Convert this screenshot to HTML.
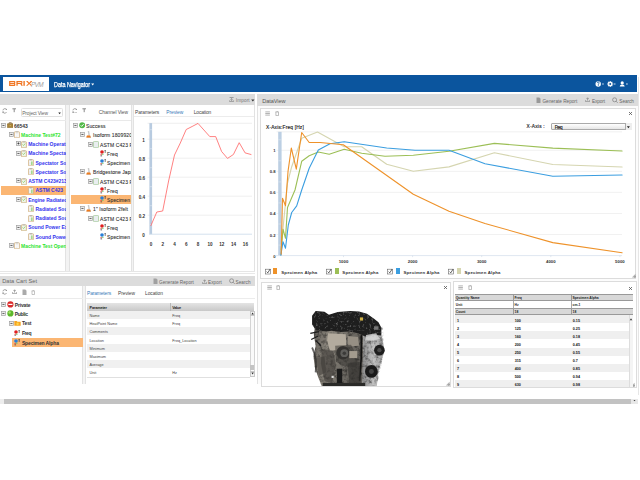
<!DOCTYPE html>
<html><head><meta charset="utf-8">
<style>
*{margin:0;padding:0;box-sizing:border-box}
html,body{width:640px;height:480px;overflow:hidden;background:#fff;font-family:"Liberation Sans",sans-serif;color:#333}
.a{position:absolute}
.t{position:absolute;white-space:nowrap}
.clip{position:absolute;overflow:hidden}
</style></head><body>
<div class="a" style="left:0px;top:75.3px;width:637px;height:16.7px;background:#0b559e;"></div>
<div class="a" style="left:3px;top:77.1px;width:46px;height:13.5px;background:#fff;"></div>
<svg class="a" style="left:8.5px;top:81.4px;" width="23" height="5" viewBox="0 0 23 5"><g fill="#f07522"><path d="M0.1 0h5.6l0.6 0.6v1.4l-0.4 0.4 0.4 0.4v1.5l-0.6 0.6h-5.6z"/></g><g fill="#fff"><rect x="1.3" y="1.15" width="3.8" height="0.75"/><rect x="1.3" y="2.95" width="3.8" height="0.75"/></g><path d="M7.4 0h5.4l0.6 0.6v1.6l-0.6 0.5 1 2.1h-1.5l-0.9-1.8h-2.7v1.8h-1.3z" fill="#f07522"/><rect x="8.7" y="1.15" width="3.6" height="0.8" fill="#fff"/><rect x="14.4" y="0" width="1.4" height="4.8" fill="#f07522"/><path d="M17 0h1.6l1.6 1.8 1.6-1.8h1.6l-2.4 2.4 2.4 2.4h-1.6l-1.6-1.8-1.6 1.8h-1.6l2.4-2.4z" fill="#f07522"/></svg>
<div class="t" style="left:31.00px;top:81px;font-size:6.4px;line-height:7.149px;color:#a0a0a0;letter-spacing:-0.684px;font-style:italic;">PVM</div>
<div class="t" style="left:54.00px;top:81px;font-size:6.6px;line-height:7.372px;color:#fff;transform:scaleX(0.8178);transform-origin:0 0;-webkit-text-stroke:0.25px #fff;">Data Navigator</div>
<svg class="a" style="left:90.5px;top:83px;" width="3.5" height="3" viewBox="0 0 3.5 3"><path d="M0.2 0.6h3l-1.5 1.8z" fill="#fff"/></svg>
<svg class="a" style="left:594px;top:80px;" width="44" height="9" viewBox="0 0 44 9">
 <circle cx="4.2" cy="4" r="2.7" fill="#fff"/><path d="M3.2 3.1 Q3.3 2 4.2 2 Q5.2 2 5.2 3 Q5.2 3.7 4.3 4.1 V4.8" stroke="#0b559e" stroke-width="0.8" fill="none"/><rect x="3.9" y="5.3" width="0.8" height="0.7" fill="#0b559e"/>
 <rect x="8.1" y="3.6" width="1.7" height="0.8" fill="#fff"/>
 <g stroke="#fff" stroke-width="1.1"><line x1="16.2" y1="1" x2="16.2" y2="7"/><line x1="13.2" y1="4" x2="19.2" y2="4"/><line x1="14.1" y1="1.9" x2="18.3" y2="6.1"/><line x1="18.3" y1="1.9" x2="14.1" y2="6.1"/></g>
 <circle cx="16.2" cy="4" r="2.1" fill="#fff"/><circle cx="16.2" cy="4" r="1" fill="#0b559e"/>
 <rect x="19.8" y="3.6" width="1.7" height="0.8" fill="#fff"/>
 <circle cx="28.2" cy="2.9" r="1.6" fill="#fff"/><path d="M25.7 6.6 Q25.8 4.6 28.2 4.6 Q30.6 4.6 30.7 6.6Z" fill="#fff"/>
 <rect x="32" y="3.6" width="1.8" height="0.8" fill="#fff"/></svg>
<div class="a" style="left:638px;top:77px;width:1px;height:318px;background:#e6e6e6;"></div>
<div class="a" style="left:0px;top:93.6px;width:255px;height:11.4px;background:#dcdcdc;"></div>
<svg class="a" style="left:229.2px;top:96.8px;" width="5.5" height="5" viewBox="0 0 5.5 5"><path d="M0.6 0.5h4M2.6 1v2.4M1.5 2.4l1.1 1.1 1.1-1.1M0.6 3.4v1.2h4V3.4" stroke="#888" stroke-width="0.75" fill="none"/></svg>
<div class="t" style="left:235.80px;top:98px;font-size:4.7px;line-height:5.250px;color:#777;letter-spacing:0.116px;">Import</div>
<svg class="a" style="left:251px;top:98.8px;" width="4" height="3" viewBox="0 0 4 3"><path d="M0.2 0.5h3.3l-1.65 2z" fill="#333"/></svg>
<div class="a" style="left:0px;top:105px;width:255px;height:167px;background:#f3f3f3;"></div>
<div class="a" style="left:0px;top:105px;width:65.6px;height:166px;background:#fff;border-right:1px solid #e2e2e2;"></div>
<div class="a" style="left:68.6px;top:105px;width:63px;height:166px;background:#fff;border-left:1px solid #e2e2e2;border-right:1px solid #e2e2e2;"></div>
<div class="a" style="left:133.4px;top:105px;width:121.6px;height:166px;background:#fff;border-left:1px solid #e2e2e2;border-right:1px solid #e2e2e2;"></div>
<div class="a" style="left:0px;top:271px;width:255px;height:1px;background:#e6e6e6;"></div>
<svg class="a" style="left:1.6px;top:108px;" width="5.5" height="5.5" viewBox="0 0 5.5 5.5"><path d="M4.5 1.5A2 2 0 0 0 0.9 2.3M0.9 3.9A2 2 0 0 0 4.5 4.2" fill="none" stroke="#888" stroke-width="0.8"/><path d="M4.9 0.4v1.6H3.3z" fill="#888"/><path d="M0.5 5.2V3.6h1.6z" fill="#888"/></svg>
<svg class="a" style="left:12.2px;top:108.3px;" width="5" height="5" viewBox="0 0 5 5"><path d="M0.4 0.8h3.6M2.2 0.8v3.4" stroke="#888" stroke-width="1.0" fill="none"/></svg>
<div class="a" style="left:20.5px;top:107.6px;width:42px;height:9.8px;background:#fff;border:0.8px solid #e0e0e0;border-radius:1.5px;"></div>
<div class="t" style="left:22.20px;top:111px;font-size:4.9px;line-height:5.473px;color:#666;letter-spacing:-0.122px;">Project View</div>
<svg class="a" style="left:58px;top:111.6px;" width="3.5" height="3" viewBox="0 0 3.5 3"><path d="M0.3 0.5h2.6l-1.3 1.8z" fill="#222"/></svg>
<div class="a" style="left:0px;top:119.5px;width:65.6px;height:0.8px;background:#e9e9e9;"></div>
<svg class="a" style="left:72px;top:107.6px;" width="5.5" height="5.5" viewBox="0 0 5.5 5.5"><path d="M4.5 1.5A2 2 0 0 0 0.9 2.3M0.9 3.9A2 2 0 0 0 4.5 4.2" fill="none" stroke="#888" stroke-width="0.8"/><path d="M4.9 0.4v1.6H3.3z" fill="#888"/><path d="M0.5 5.2V3.6h1.6z" fill="#888"/></svg>
<svg class="a" style="left:82px;top:107.9px;" width="5" height="5" viewBox="0 0 5 5"><path d="M0.4 0.8h3.6M2.2 0.8v3.4" stroke="#888" stroke-width="1.0" fill="none"/></svg>
<div class="t" style="left:98.80px;top:110px;font-size:4.9px;line-height:5.473px;color:#555;letter-spacing:-0.086px;">Channel View</div>
<div class="a" style="left:69.6px;top:120px;width:61px;height:0.8px;background:#e9e9e9;"></div>
<div class="t" style="left:135.10px;top:110px;font-size:4.9px;line-height:5.473px;color:#444;letter-spacing:-0.125px;">Parameters</div>
<div class="t" style="left:166.30px;top:110px;font-size:4.9px;line-height:5.473px;color:#3a7ab8;letter-spacing:-0.088px;">Preview</div>
<div class="t" style="left:193.80px;top:110px;font-size:4.9px;line-height:5.473px;color:#444;letter-spacing:-0.161px;">Location</div>
<div class="a" style="left:134.4px;top:116.4px;width:119.6px;height:0.8px;background:#ececec;"></div>
<div class="clip" style="left:0;top:0;width:65.6px;height:271px">
<div class="a" style="left:1px;top:185.6px;width:65px;height:9.2px;background:#fbb673;"></div>
<svg class="a" style="left:1.4000000000000001px;top:122.9px;" width="5" height="5" viewBox="0 0 5 5"><rect x="0.45" y="0.45" width="4" height="4" fill="#f0f0f0" stroke="#a0a0a0" stroke-width="0.7"/><path d="M1.4 2.45h2.1" stroke="#333" stroke-width="0.75"/></svg>
<svg class="a" style="left:6.8px;top:122.0px;" width="6.5" height="6" viewBox="0 0 6.5 6"><rect x="0.3" y="1.6" width="5.9" height="4.2" rx="0.6" fill="#a8843a" stroke="#7a5a20" stroke-width="0.4"/><path d="M2.2 1.6v-1h2.1v1" fill="none" stroke="#6b4e1c" stroke-width="0.6"/><rect x="2.7" y="3.2" width="1.1" height="0.9" fill="#e6c66a"/></svg>
<div class="t" style="left:14.00px;top:124px;font-size:5.0px;line-height:5.585px;color:#333;font-weight:bold;">66543</div>
<svg class="a" style="left:8.55px;top:132.15px;" width="5" height="5" viewBox="0 0 5 5"><rect x="0.45" y="0.45" width="4" height="4" fill="#f0f0f0" stroke="#a0a0a0" stroke-width="0.7"/><path d="M1.4 2.45h2.1" stroke="#333" stroke-width="0.75"/></svg>
<svg class="a" style="left:13.7px;top:131.25px;" width="6" height="7" viewBox="0 0 6 7"><rect x="0.4" y="0.8" width="5" height="6" rx="0.5" fill="#fff" stroke="#c9a36a" stroke-width="0.7"/><rect x="1.8" y="0.3" width="2.2" height="1" fill="#bbb"/><path d="M1.5 2.5h2.8M1.5 4h2.8M1.5 5.4h2" stroke="#ddd" stroke-width="0.5"/></svg>
<div class="t" style="left:21.00px;top:133px;font-size:5.0px;line-height:5.585px;color:#2ce42c;font-weight:bold;">Machine Test#72</div>
<svg class="a" style="left:15.700000000000001px;top:141.4px;" width="5" height="5" viewBox="0 0 5 5"><rect x="0.45" y="0.45" width="4" height="4" fill="#f0f0f0" stroke="#a0a0a0" stroke-width="0.7"/><path d="M1.4 2.45h2.1" stroke="#333" stroke-width="0.75"/><path d="M2.45 1.4v2.1" stroke="#333" stroke-width="0.75"/></svg>
<svg class="a" style="left:21px;top:140.5px;" width="6" height="7" viewBox="0 0 6 7"><rect x="0.4" y="0.8" width="5" height="6" rx="0.5" fill="#eef5e6" stroke="#c9a36a" stroke-width="0.7"/><rect x="1.8" y="0.3" width="2.2" height="1" fill="#bbb"/><path d="M1.5 3.5l1 1 1.8-2" stroke="#7cc45c" stroke-width="0.7" fill="none"/></svg>
<div class="t" style="left:28.20px;top:142px;font-size:5.0px;line-height:5.585px;color:#3434ee;font-weight:bold;">Machine Operations</div>
<svg class="a" style="left:15.700000000000001px;top:150.65px;" width="5" height="5" viewBox="0 0 5 5"><rect x="0.45" y="0.45" width="4" height="4" fill="#f0f0f0" stroke="#a0a0a0" stroke-width="0.7"/><path d="M1.4 2.45h2.1" stroke="#333" stroke-width="0.75"/></svg>
<svg class="a" style="left:21px;top:149.75px;" width="6" height="7" viewBox="0 0 6 7"><rect x="0.4" y="0.8" width="5" height="6" rx="0.5" fill="#eef5e6" stroke="#c9a36a" stroke-width="0.7"/><rect x="1.8" y="0.3" width="2.2" height="1" fill="#bbb"/><path d="M1.5 3.5l1 1 1.8-2" stroke="#7cc45c" stroke-width="0.7" fill="none"/></svg>
<div class="t" style="left:28.20px;top:151px;font-size:5.0px;line-height:5.585px;color:#3434ee;font-weight:bold;">Machine Spectator</div>
<svg class="a" style="left:28.3px;top:159.0px;" width="6" height="7" viewBox="0 0 6 7"><rect x="0.4" y="0.8" width="5" height="6" rx="0.4" fill="#fff" stroke="#c9a36a" stroke-width="0.7"/><rect x="1.6" y="0.3" width="2.4" height="1" fill="#aaa"/><rect x="3.4" y="2.4" width="1" height="3.6" fill="#6cc04a"/><rect x="1.5" y="2.4" width="1" height="3.6" fill="#ddd"/></svg>
<div class="t" style="left:35.50px;top:161px;font-size:5.0px;line-height:5.585px;color:#3434ee;font-weight:bold;">Spectator Sound</div>
<svg class="a" style="left:28.3px;top:168.25px;" width="6" height="7" viewBox="0 0 6 7"><rect x="0.4" y="0.8" width="5" height="6" rx="0.4" fill="#fff" stroke="#c9a36a" stroke-width="0.7"/><rect x="1.6" y="0.3" width="2.4" height="1" fill="#aaa"/><rect x="3.4" y="2.4" width="1" height="3.6" fill="#6cc04a"/><rect x="1.5" y="2.4" width="1" height="3.6" fill="#ddd"/></svg>
<div class="t" style="left:35.50px;top:170px;font-size:5.0px;line-height:5.585px;color:#3434ee;font-weight:bold;">Spectator Sound</div>
<svg class="a" style="left:15.700000000000001px;top:178.4px;" width="5" height="5" viewBox="0 0 5 5"><rect x="0.45" y="0.45" width="4" height="4" fill="#f0f0f0" stroke="#a0a0a0" stroke-width="0.7"/><path d="M1.4 2.45h2.1" stroke="#333" stroke-width="0.75"/></svg>
<svg class="a" style="left:21px;top:177.5px;" width="6" height="7" viewBox="0 0 6 7"><rect x="0.4" y="0.8" width="5" height="6" rx="0.5" fill="#eef5e6" stroke="#c9a36a" stroke-width="0.7"/><rect x="1.8" y="0.3" width="2.2" height="1" fill="#bbb"/><path d="M1.5 3.5l1 1 1.8-2" stroke="#7cc45c" stroke-width="0.7" fill="none"/></svg>
<div class="t" style="left:28.20px;top:179px;font-size:5.0px;line-height:5.585px;color:#3434ee;font-weight:bold;">ASTM C423#2131</div>
<svg class="a" style="left:28.3px;top:186.75px;" width="6" height="7" viewBox="0 0 6 7"><rect x="0.4" y="0.8" width="5" height="6" rx="0.4" fill="#fff" stroke="#c9a36a" stroke-width="0.7"/><rect x="1.6" y="0.3" width="2.4" height="1" fill="#aaa"/><rect x="3.4" y="2.4" width="1" height="3.6" fill="#6cc04a"/><rect x="1.5" y="2.4" width="1" height="3.6" fill="#ddd"/></svg>
<div class="t" style="left:35.50px;top:188px;font-size:5.0px;line-height:5.585px;color:#3434ee;font-weight:bold;">ASTM C423</div>
<svg class="a" style="left:15.700000000000001px;top:196.9px;" width="5" height="5" viewBox="0 0 5 5"><rect x="0.45" y="0.45" width="4" height="4" fill="#f0f0f0" stroke="#a0a0a0" stroke-width="0.7"/><path d="M1.4 2.45h2.1" stroke="#333" stroke-width="0.75"/></svg>
<svg class="a" style="left:21px;top:196.0px;" width="6" height="7" viewBox="0 0 6 7"><rect x="0.4" y="0.8" width="5" height="6" rx="0.5" fill="#eef5e6" stroke="#c9a36a" stroke-width="0.7"/><rect x="1.8" y="0.3" width="2.2" height="1" fill="#bbb"/><path d="M1.5 3.5l1 1 1.8-2" stroke="#7cc45c" stroke-width="0.7" fill="none"/></svg>
<div class="t" style="left:28.20px;top:198px;font-size:5.0px;line-height:5.585px;color:#3434ee;font-weight:bold;">Engine Radiated</div>
<svg class="a" style="left:28.3px;top:205.25px;" width="6" height="7" viewBox="0 0 6 7"><rect x="0.4" y="0.8" width="5" height="6" rx="0.4" fill="#fff" stroke="#c9a36a" stroke-width="0.7"/><rect x="1.6" y="0.3" width="2.4" height="1" fill="#aaa"/><rect x="3.4" y="2.4" width="1" height="3.6" fill="#6cc04a"/><rect x="1.5" y="2.4" width="1" height="3.6" fill="#ddd"/></svg>
<div class="t" style="left:35.50px;top:207px;font-size:5.0px;line-height:5.585px;color:#3434ee;font-weight:bold;">Radiated Sound</div>
<svg class="a" style="left:28.3px;top:214.5px;" width="6" height="7" viewBox="0 0 6 7"><rect x="0.4" y="0.8" width="5" height="6" rx="0.4" fill="#fff" stroke="#c9a36a" stroke-width="0.7"/><rect x="1.6" y="0.3" width="2.4" height="1" fill="#aaa"/><rect x="3.4" y="2.4" width="1" height="3.6" fill="#6cc04a"/><rect x="1.5" y="2.4" width="1" height="3.6" fill="#ddd"/></svg>
<div class="t" style="left:35.50px;top:216px;font-size:5.0px;line-height:5.585px;color:#3434ee;font-weight:bold;">Radiated Sound</div>
<svg class="a" style="left:15.700000000000001px;top:224.65px;" width="5" height="5" viewBox="0 0 5 5"><rect x="0.45" y="0.45" width="4" height="4" fill="#f0f0f0" stroke="#a0a0a0" stroke-width="0.7"/><path d="M1.4 2.45h2.1" stroke="#333" stroke-width="0.75"/></svg>
<svg class="a" style="left:21px;top:223.75px;" width="6" height="7" viewBox="0 0 6 7"><rect x="0.4" y="0.8" width="5" height="6" rx="0.5" fill="#eef5e6" stroke="#c9a36a" stroke-width="0.7"/><rect x="1.8" y="0.3" width="2.2" height="1" fill="#bbb"/><path d="M1.5 3.5l1 1 1.8-2" stroke="#7cc45c" stroke-width="0.7" fill="none"/></svg>
<div class="t" style="left:28.20px;top:225px;font-size:5.0px;line-height:5.585px;color:#3434ee;font-weight:bold;">Sound Power Ex</div>
<svg class="a" style="left:28.3px;top:233.0px;" width="6" height="7" viewBox="0 0 6 7"><rect x="0.4" y="0.8" width="5" height="6" rx="0.4" fill="#fff" stroke="#c9a36a" stroke-width="0.7"/><rect x="1.6" y="0.3" width="2.4" height="1" fill="#aaa"/><rect x="3.4" y="2.4" width="1" height="3.6" fill="#6cc04a"/><rect x="1.5" y="2.4" width="1" height="3.6" fill="#ddd"/></svg>
<div class="t" style="left:35.50px;top:235px;font-size:5.0px;line-height:5.585px;color:#3434ee;font-weight:bold;">Sound Power</div>
<svg class="a" style="left:8.55px;top:243.15px;" width="5" height="5" viewBox="0 0 5 5"><rect x="0.45" y="0.45" width="4" height="4" fill="#f0f0f0" stroke="#a0a0a0" stroke-width="0.7"/><path d="M1.4 2.45h2.1" stroke="#333" stroke-width="0.75"/></svg>
<svg class="a" style="left:13.7px;top:242.25px;" width="6" height="7" viewBox="0 0 6 7"><rect x="0.4" y="0.8" width="5" height="6" rx="0.5" fill="#fff" stroke="#c9a36a" stroke-width="0.7"/><rect x="1.8" y="0.3" width="2.2" height="1" fill="#bbb"/><path d="M1.5 2.5h2.8M1.5 4h2.8M1.5 5.4h2" stroke="#ddd" stroke-width="0.5"/></svg>
<div class="t" style="left:21.00px;top:244px;font-size:5.0px;line-height:5.585px;color:#2ce42c;font-weight:bold;">Machine Test Operation</div>
</div>
<div class="clip" style="left:0;top:0;width:131px;height:271px">
<div class="a" style="left:71px;top:195.4px;width:60px;height:9.0px;background:#fbb673;"></div>
<svg class="a" style="left:73.2px;top:123.10000000000001px;" width="5" height="5" viewBox="0 0 5 5"><rect x="0.45" y="0.45" width="4" height="4" fill="#f0f0f0" stroke="#a0a0a0" stroke-width="0.7"/><path d="M1.4 2.45h2.1" stroke="#333" stroke-width="0.75"/></svg>
<svg class="a" style="left:78.6px;top:122.2px;" width="6.4" height="6.4" viewBox="0 0 6.4 6.4"><circle cx="3.2" cy="3.2" r="3" fill="#52b848"/><path d="M1.7 3.3l1 1.1 2-2.3" stroke="#fff" stroke-width="0.9" fill="none"/></svg>
<div class="t" style="left:86.00px;top:124px;font-size:5.0px;line-height:5.585px;color:#2a2a2a;-webkit-text-stroke:0.08px #333;letter-spacing:0.1px;">Success</div>
<svg class="a" style="left:80.3px;top:132.35px;" width="5" height="5" viewBox="0 0 5 5"><rect x="0.45" y="0.45" width="4" height="4" fill="#f0f0f0" stroke="#a0a0a0" stroke-width="0.7"/><path d="M1.4 2.45h2.1" stroke="#333" stroke-width="0.75"/></svg>
<svg class="a" style="left:86.3px;top:131.45px;" width="5" height="7" viewBox="0 0 5 7"><path d="M2 0.4h1v2.6l1.8 3.5h-3.6l1.8-3.5z" fill="#f3f3f3" stroke="#999" stroke-width="0.4"/><path d="M1 4.6h3l0.9 2h-4.8z" fill="#ee7b1c"/></svg>
<div class="t" style="left:93.00px;top:133px;font-size:5.0px;line-height:5.585px;color:#2a2a2a;-webkit-text-stroke:0.08px #333;letter-spacing:0.1px;">Isoform 1809920</div>
<svg class="a" style="left:87.7px;top:141.6px;" width="5" height="5" viewBox="0 0 5 5"><rect x="0.45" y="0.45" width="4" height="4" fill="#f0f0f0" stroke="#a0a0a0" stroke-width="0.7"/><path d="M1.4 2.45h2.1" stroke="#333" stroke-width="0.75"/></svg>
<svg class="a" style="left:93.2px;top:140.7px;" width="6" height="7" viewBox="0 0 6 7"><rect x="0.5" y="0.4" width="5" height="6.3" rx="0.8" fill="#e9eef0" stroke="#9cc490" stroke-width="0.7"/></svg>
<div class="t" style="left:100.00px;top:143px;font-size:5.0px;line-height:5.585px;color:#2a2a2a;-webkit-text-stroke:0.08px #333;letter-spacing:0.1px;">ASTM C423 R</div>
<svg class="a" style="left:100px;top:150.05px;" width="6.5" height="6.5" viewBox="0 0 6.5 6.5"><circle cx="2" cy="2" r="1.8" fill="#e02020"/><path d="M4.4 0.6h1.6M5.2 0.6v2.4" stroke="#333" stroke-width="0.6"/><rect x="0.5" y="4.2" width="1.3" height="1" fill="#d33"/><rect x="2" y="3.8" width="1.6" height="0.9" fill="#6c6"/><rect x="0.5" y="5.5" width="1.6" height="0.8" fill="#444"/></svg>
<div class="t" style="left:107.10px;top:152px;font-size:5.0px;line-height:5.585px;color:#2a2a2a;-webkit-text-stroke:0.08px #333;letter-spacing:0.1px;">Freq</div>
<svg class="a" style="left:100px;top:159.3px;" width="6.5" height="6.5" viewBox="0 0 6.5 6.5"><circle cx="2" cy="2" r="1.8" fill="#2a7fd8"/><path d="M4.4 0.6h1.6M5.2 0.6v2.4" stroke="#333" stroke-width="0.6"/><rect x="0.5" y="4.2" width="1.3" height="1" fill="#d33"/><rect x="2" y="3.8" width="1.6" height="0.9" fill="#6c6"/><rect x="0.5" y="5.5" width="1.6" height="0.8" fill="#444"/></svg>
<div class="t" style="left:107.10px;top:161px;font-size:5.0px;line-height:5.585px;color:#2a2a2a;-webkit-text-stroke:0.08px #333;letter-spacing:0.1px;">Specimen</div>
<svg class="a" style="left:80.3px;top:169.35px;" width="5" height="5" viewBox="0 0 5 5"><rect x="0.45" y="0.45" width="4" height="4" fill="#f0f0f0" stroke="#a0a0a0" stroke-width="0.7"/><path d="M1.4 2.45h2.1" stroke="#333" stroke-width="0.75"/></svg>
<svg class="a" style="left:86.3px;top:168.45px;" width="5" height="7" viewBox="0 0 5 7"><path d="M2 0.4h1v2.6l1.8 3.5h-3.6l1.8-3.5z" fill="#f3f3f3" stroke="#999" stroke-width="0.4"/><path d="M1 4.6h3l0.9 2h-4.8z" fill="#ee7b1c"/></svg>
<div class="t" style="left:93.00px;top:170px;font-size:5.0px;line-height:5.585px;color:#2a2a2a;-webkit-text-stroke:0.08px #333;letter-spacing:0.1px;">Bridgestone Japan</div>
<svg class="a" style="left:87.7px;top:178.6px;" width="5" height="5" viewBox="0 0 5 5"><rect x="0.45" y="0.45" width="4" height="4" fill="#f0f0f0" stroke="#a0a0a0" stroke-width="0.7"/><path d="M1.4 2.45h2.1" stroke="#333" stroke-width="0.75"/></svg>
<svg class="a" style="left:93.2px;top:177.7px;" width="6" height="7" viewBox="0 0 6 7"><rect x="0.5" y="0.4" width="5" height="6.3" rx="0.8" fill="#e9eef0" stroke="#9cc490" stroke-width="0.7"/></svg>
<div class="t" style="left:100.00px;top:180px;font-size:5.0px;line-height:5.585px;color:#2a2a2a;-webkit-text-stroke:0.08px #333;letter-spacing:0.1px;">ASTM C423 R</div>
<svg class="a" style="left:100px;top:187.05px;" width="6.5" height="6.5" viewBox="0 0 6.5 6.5"><circle cx="2" cy="2" r="1.8" fill="#e02020"/><path d="M4.4 0.6h1.6M5.2 0.6v2.4" stroke="#333" stroke-width="0.6"/><rect x="0.5" y="4.2" width="1.3" height="1" fill="#d33"/><rect x="2" y="3.8" width="1.6" height="0.9" fill="#6c6"/><rect x="0.5" y="5.5" width="1.6" height="0.8" fill="#444"/></svg>
<div class="t" style="left:107.10px;top:189px;font-size:5.0px;line-height:5.585px;color:#2a2a2a;-webkit-text-stroke:0.08px #333;letter-spacing:0.1px;">Freq</div>
<svg class="a" style="left:100px;top:196.3px;" width="6.5" height="6.5" viewBox="0 0 6.5 6.5"><circle cx="2" cy="2" r="1.8" fill="#2a7fd8"/><path d="M4.4 0.6h1.6M5.2 0.6v2.4" stroke="#333" stroke-width="0.6"/><rect x="0.5" y="4.2" width="1.3" height="1" fill="#d33"/><rect x="2" y="3.8" width="1.6" height="0.9" fill="#6c6"/><rect x="0.5" y="5.5" width="1.6" height="0.8" fill="#444"/></svg>
<div class="t" style="left:107.10px;top:198px;font-size:5.0px;line-height:5.585px;color:#2a2a2a;-webkit-text-stroke:0.08px #333;letter-spacing:0.1px;">Specimen</div>
<svg class="a" style="left:80.3px;top:206.35px;" width="5" height="5" viewBox="0 0 5 5"><rect x="0.45" y="0.45" width="4" height="4" fill="#f0f0f0" stroke="#a0a0a0" stroke-width="0.7"/><path d="M1.4 2.45h2.1" stroke="#333" stroke-width="0.75"/></svg>
<svg class="a" style="left:86.3px;top:205.45px;" width="5" height="7" viewBox="0 0 5 7"><path d="M2 0.4h1v2.6l1.8 3.5h-3.6l1.8-3.5z" fill="#f3f3f3" stroke="#999" stroke-width="0.4"/><path d="M1 4.6h3l0.9 2h-4.8z" fill="#ee7b1c"/></svg>
<div class="t" style="left:93.00px;top:207px;font-size:5.0px;line-height:5.585px;color:#2a2a2a;-webkit-text-stroke:0.08px #333;letter-spacing:0.1px;">1" Isoform 2felt</div>
<svg class="a" style="left:87.7px;top:215.6px;" width="5" height="5" viewBox="0 0 5 5"><rect x="0.45" y="0.45" width="4" height="4" fill="#f0f0f0" stroke="#a0a0a0" stroke-width="0.7"/><path d="M1.4 2.45h2.1" stroke="#333" stroke-width="0.75"/></svg>
<svg class="a" style="left:93.2px;top:214.7px;" width="6" height="7" viewBox="0 0 6 7"><rect x="0.5" y="0.4" width="5" height="6.3" rx="0.8" fill="#e9eef0" stroke="#9cc490" stroke-width="0.7"/></svg>
<div class="t" style="left:100.00px;top:217px;font-size:5.0px;line-height:5.585px;color:#2a2a2a;-webkit-text-stroke:0.08px #333;letter-spacing:0.1px;">ASTM C423 R</div>
<svg class="a" style="left:100px;top:224.05px;" width="6.5" height="6.5" viewBox="0 0 6.5 6.5"><circle cx="2" cy="2" r="1.8" fill="#e02020"/><path d="M4.4 0.6h1.6M5.2 0.6v2.4" stroke="#333" stroke-width="0.6"/><rect x="0.5" y="4.2" width="1.3" height="1" fill="#d33"/><rect x="2" y="3.8" width="1.6" height="0.9" fill="#6c6"/><rect x="0.5" y="5.5" width="1.6" height="0.8" fill="#444"/></svg>
<div class="t" style="left:107.10px;top:226px;font-size:5.0px;line-height:5.585px;color:#2a2a2a;-webkit-text-stroke:0.08px #333;letter-spacing:0.1px;">Freq</div>
<svg class="a" style="left:100px;top:233.3px;" width="6.5" height="6.5" viewBox="0 0 6.5 6.5"><circle cx="2" cy="2" r="1.8" fill="#2a7fd8"/><path d="M4.4 0.6h1.6M5.2 0.6v2.4" stroke="#333" stroke-width="0.6"/><rect x="0.5" y="4.2" width="1.3" height="1" fill="#d33"/><rect x="2" y="3.8" width="1.6" height="0.9" fill="#6c6"/><rect x="0.5" y="5.5" width="1.6" height="0.8" fill="#444"/></svg>
<div class="t" style="left:107.10px;top:235px;font-size:5.0px;line-height:5.585px;color:#2a2a2a;-webkit-text-stroke:0.08px #333;letter-spacing:0.1px;">Specimen</div>
</div>
<svg class="a" style="left:0px;top:0px;" width="260" height="272" viewBox="0 0 260 272"><line x1="147.5" y1="123.3" x2="252" y2="123.3" stroke="#ebebeb" stroke-width="0.8"/><line x1="147.5" y1="139.2" x2="252" y2="139.2" stroke="#ebebeb" stroke-width="0.8"/><line x1="147.5" y1="158.2" x2="252" y2="158.2" stroke="#ebebeb" stroke-width="0.8"/><line x1="147.5" y1="177.2" x2="252" y2="177.2" stroke="#ebebeb" stroke-width="0.8"/><line x1="147.5" y1="196.2" x2="252" y2="196.2" stroke="#ebebeb" stroke-width="0.8"/><line x1="147.5" y1="215.2" x2="252" y2="215.2" stroke="#ebebeb" stroke-width="0.8"/><rect x="149.4" y="123.1" width="2.7" height="111.1" fill="#b8cbe0"/><line x1="149.4" y1="129.7" x2="152.1" y2="129.7" stroke="#dfe8f1" stroke-width="0.6"/><line x1="149.4" y1="148.7" x2="152.1" y2="148.7" stroke="#dfe8f1" stroke-width="0.6"/><line x1="149.4" y1="167.7" x2="152.1" y2="167.7" stroke="#dfe8f1" stroke-width="0.6"/><line x1="149.4" y1="186.7" x2="152.1" y2="186.7" stroke="#dfe8f1" stroke-width="0.6"/><line x1="149.4" y1="205.7" x2="152.1" y2="205.7" stroke="#dfe8f1" stroke-width="0.6"/><line x1="149.4" y1="224.7" x2="152.1" y2="224.7" stroke="#dfe8f1" stroke-width="0.6"/><line x1="149" y1="234.2" x2="252" y2="234.2" stroke="#c9d9ea" stroke-width="0.8"/><polyline points="150.9,225.6 156.8,212.0 162.7,211.0 168.6,181.0 174.5,155.0 180.3,143.0 186.2,129.5 192.1,126.5 198.0,123.4 203.9,130.0 209.8,136.6 215.7,136.6 221.6,151.5 227.5,158.4 233.4,154.5 239.2,142.7 245.1,152.9 251.0,154.5" fill="none" stroke="#ff6161" stroke-width="0.8" stroke-linejoin="round" stroke-linecap="round"/></svg>
<div class="t" style="left:142.20px;top:138px;font-size:4.6px;line-height:5.138px;color:#333;font-weight:bold;font-family:"Liberation Serif",serif;">1</div>
<div class="t" style="left:138.75px;top:157px;font-size:4.6px;line-height:5.138px;color:#333;font-weight:bold;font-family:"Liberation Serif",serif;">0.8</div>
<div class="t" style="left:138.75px;top:176px;font-size:4.6px;line-height:5.138px;color:#333;font-weight:bold;font-family:"Liberation Serif",serif;">0.6</div>
<div class="t" style="left:138.75px;top:195px;font-size:4.6px;line-height:5.138px;color:#333;font-weight:bold;font-family:"Liberation Serif",serif;">0.4</div>
<div class="t" style="left:138.75px;top:214px;font-size:4.6px;line-height:5.138px;color:#333;font-weight:bold;font-family:"Liberation Serif",serif;">0.2</div>
<div class="t" style="left:142.20px;top:233px;font-size:4.6px;line-height:5.138px;color:#333;font-weight:bold;font-family:"Liberation Serif",serif;">0</div>
<div class="t" style="left:149.75px;top:242px;font-size:4.6px;line-height:5.138px;color:#333;font-weight:bold;font-family:"Liberation Serif",serif;">0</div>
<div class="t" style="left:161.53px;top:242px;font-size:4.6px;line-height:5.138px;color:#333;font-weight:bold;font-family:"Liberation Serif",serif;">2</div>
<div class="t" style="left:173.31px;top:242px;font-size:4.6px;line-height:5.138px;color:#333;font-weight:bold;font-family:"Liberation Serif",serif;">4</div>
<div class="t" style="left:185.09px;top:242px;font-size:4.6px;line-height:5.138px;color:#333;font-weight:bold;font-family:"Liberation Serif",serif;">6</div>
<div class="t" style="left:196.87px;top:242px;font-size:4.6px;line-height:5.138px;color:#333;font-weight:bold;font-family:"Liberation Serif",serif;">8</div>
<div class="t" style="left:207.50px;top:242px;font-size:4.6px;line-height:5.138px;color:#333;font-weight:bold;font-family:"Liberation Serif",serif;">10</div>
<div class="t" style="left:219.28px;top:242px;font-size:4.6px;line-height:5.138px;color:#333;font-weight:bold;font-family:"Liberation Serif",serif;">12</div>
<div class="t" style="left:231.06px;top:242px;font-size:4.6px;line-height:5.138px;color:#333;font-weight:bold;font-family:"Liberation Serif",serif;">14</div>
<div class="t" style="left:242.84px;top:242px;font-size:4.6px;line-height:5.138px;color:#333;font-weight:bold;font-family:"Liberation Serif",serif;">16</div>
<div class="a" style="left:0px;top:273.3px;width:255px;height:0.8px;background:#e8e8e8;"></div>
<div class="a" style="left:0px;top:275.8px;width:255px;height:10.2px;background:#dcdcdc;"></div>
<div class="t" style="left:2.20px;top:278px;font-size:5.6px;line-height:6.255px;color:#666;letter-spacing:0.073px;">Data Cart Set</div>
<svg class="a" style="left:153px;top:277.9px;" width="5" height="6.5" viewBox="0 0 5 6.5"><path d="M0.5 0.5h2.8l1.2 1.2v4.3h-4z" fill="#a0a0a0"/></svg>
<div class="t" style="left:159.00px;top:280px;font-size:4.7px;line-height:5.250px;color:#666;letter-spacing:-0.001px;">Generate Report</div>
<svg class="a" style="left:201.5px;top:278.5px;" width="5.5" height="5" viewBox="0 0 5.5 5"><path d="M2.6 3.6V0.9M1.5 1.9l1.1-1.1 1.1 1.1M0.6 3.2v1.5h4V3.2" stroke="#888" stroke-width="0.75" fill="none"/></svg>
<div class="t" style="left:208.00px;top:280px;font-size:4.7px;line-height:5.250px;color:#666;letter-spacing:0.063px;">Export</div>
<svg class="a" style="left:229.3px;top:278px;" width="6" height="7" viewBox="0 0 6 7"><circle cx="2.6" cy="2.8" r="2" stroke="#888" stroke-width="0.8" fill="none"/><path d="M4 4.2l1.6 1.6" stroke="#888" stroke-width="0.9"/></svg>
<div class="t" style="left:235.50px;top:280px;font-size:4.7px;line-height:5.250px;color:#666;letter-spacing:0.042px;">Search</div>
<div class="a" style="left:0px;top:286px;width:255px;height:98px;background:#f4f4f4;"></div>
<div class="a" style="left:0px;top:286px;width:82.8px;height:98px;background:#fff;border-right:1px solid #e2e2e2;"></div>
<div class="a" style="left:84.6px;top:286px;width:170.4px;height:98px;background:#fff;border-left:1px solid #e2e2e2;"></div>
<div class="a" style="left:0px;top:297.8px;width:82.8px;height:0.8px;background:#ebebeb;"></div>
<svg class="a" style="left:1.6px;top:289.4px;" width="5.5" height="5.5" viewBox="0 0 5.5 5.5"><path d="M4.5 1.5A2 2 0 0 0 0.9 2.3M0.9 3.9A2 2 0 0 0 4.5 4.2" fill="none" stroke="#888" stroke-width="0.8"/><path d="M4.9 0.4v1.6H3.3z" fill="#888"/><path d="M0.5 5.2V3.6h1.6z" fill="#888"/></svg>
<svg class="a" style="left:11.5px;top:289.4px;" width="5.5" height="5" viewBox="0 0 5.5 5"><path d="M2.6 3.6V0.9M1.5 1.9l1.1-1.1 1.1 1.1M0.6 3.2v1.5h4V3.2" stroke="#888" stroke-width="0.75" fill="none"/></svg>
<svg class="a" style="left:21.5px;top:289px;" width="5" height="6.5" viewBox="0 0 5 6.5"><path d="M0.5 0.5h2.8l1.2 1.2v4.3h-4z" fill="#aaa"/></svg>
<svg class="a" style="left:31px;top:289.8px;" width="4.5" height="5" viewBox="0 0 4.5 5"><path d="M0.5 1h3.5M1 1.2v3.3h2.5V1.2M1.6 0.5h1.3" stroke="#aaa" stroke-width="0.7" fill="none"/></svg>
<div class="a" style="left:12.2px;top:338px;width:70.6px;height:9.2px;background:#fbb673;"></div>
<svg class="a" style="left:1.2px;top:301.7px;" width="5" height="5" viewBox="0 0 5 5"><rect x="0.45" y="0.45" width="4" height="4" fill="#f0f0f0" stroke="#a0a0a0" stroke-width="0.7"/><path d="M1.4 2.45h2.1" stroke="#333" stroke-width="0.75"/></svg>
<svg class="a" style="left:7px;top:300.6px;" width="7" height="7" viewBox="0 0 7 7"><circle cx="3.4" cy="3.4" r="3.1" fill="#d92b2b"/><rect x="1.3" y="2.8" width="4.2" height="1.2" fill="#fff"/></svg>
<div class="t" style="left:14.80px;top:303px;font-size:5.0px;line-height:5.585px;color:#333;letter-spacing:-0.163px;font-weight:bold;">Private</div>
<svg class="a" style="left:1.2px;top:311.09999999999997px;" width="5" height="5" viewBox="0 0 5 5"><rect x="0.45" y="0.45" width="4" height="4" fill="#f0f0f0" stroke="#a0a0a0" stroke-width="0.7"/><path d="M1.4 2.45h2.1" stroke="#333" stroke-width="0.75"/></svg>
<svg class="a" style="left:7px;top:310.1px;" width="7" height="7" viewBox="0 0 7 7"><circle cx="3.4" cy="3.4" r="3.1" fill="#5cb82c"/><circle cx="2.6" cy="2.5" r="1.2" fill="#a8e070"/></svg>
<div class="t" style="left:14.80px;top:312px;font-size:5.0px;line-height:5.585px;color:#333;letter-spacing:-0.361px;font-weight:bold;">Public</div>
<svg class="a" style="left:9.4px;top:320.7px;" width="5" height="5" viewBox="0 0 5 5"><rect x="0.45" y="0.45" width="4" height="4" fill="#f0f0f0" stroke="#a0a0a0" stroke-width="0.7"/><path d="M1.4 2.45h2.1" stroke="#333" stroke-width="0.75"/></svg>
<svg class="a" style="left:13.6px;top:320px;" width="7" height="6" viewBox="0 0 7 6"><path d="M0.3 1h2.4l0.8 0.8h3.2v3.9h-6.4z" fill="#f5a623"/><circle cx="3.6" cy="3.8" r="1.2" fill="#ffd84a"/></svg>
<div class="t" style="left:21.90px;top:321px;font-size:5.0px;line-height:5.585px;color:#333;letter-spacing:-0.103px;font-weight:bold;">Test</div>
<svg class="a" style="left:14.2px;top:329.8px;" width="6.5" height="6.5" viewBox="0 0 6.5 6.5"><circle cx="2" cy="2" r="1.8" fill="#e02020"/><path d="M4.4 0.6h1.6M5.2 0.6v2.4" stroke="#333" stroke-width="0.6"/><rect x="0.5" y="4.2" width="1.3" height="1" fill="#d33"/><rect x="2" y="3.8" width="1.6" height="0.9" fill="#6c6"/><rect x="0.5" y="5.5" width="1.6" height="0.8" fill="#444"/></svg>
<div class="t" style="left:21.90px;top:331px;font-size:5.0px;line-height:5.585px;color:#333;letter-spacing:-0.412px;font-weight:bold;">Freq</div>
<svg class="a" style="left:14.2px;top:339.3px;" width="6.5" height="6.5" viewBox="0 0 6.5 6.5"><circle cx="2" cy="2" r="1.8" fill="#2a7fd8"/><path d="M4.4 0.6h1.6M5.2 0.6v2.4" stroke="#333" stroke-width="0.6"/><rect x="0.5" y="4.2" width="1.3" height="1" fill="#d33"/><rect x="2" y="3.8" width="1.6" height="0.9" fill="#6c6"/><rect x="0.5" y="5.5" width="1.6" height="0.8" fill="#444"/></svg>
<div class="t" style="left:21.90px;top:341px;font-size:5.0px;line-height:5.585px;color:#333;letter-spacing:-0.124px;font-weight:bold;">Specimen Alpha</div>
<div class="t" style="left:87.00px;top:291px;font-size:4.9px;line-height:5.473px;color:#3a7ab8;letter-spacing:-0.125px;">Parameters</div>
<div class="t" style="left:118.00px;top:291px;font-size:4.9px;line-height:5.473px;color:#444;letter-spacing:-0.071px;">Preview</div>
<div class="t" style="left:145.00px;top:291px;font-size:4.9px;line-height:5.473px;color:#444;letter-spacing:-0.075px;">Location</div>
<div class="a" style="left:85.6px;top:298px;width:169.4px;height:0.8px;background:#ececec;"></div>
<div class="a" style="left:87px;top:303.2px;width:167.4px;height:7.6px;background:#d0d0d0;background:linear-gradient(#e4e4e4,#c8c8c8);"></div>
<div class="a" style="left:170px;top:303.2px;width:0.6px;height:7.6px;background:#b8b8b8;"></div>
<div class="t" style="left:89.50px;top:306px;font-size:3.8px;line-height:4.245px;color:#222;letter-spacing:-0.136px;font-weight:bold;">Parameter</div>
<div class="t" style="left:172.30px;top:306px;font-size:3.8px;line-height:4.245px;color:#222;letter-spacing:-0.307px;font-weight:bold;">Value</div>
<div class="a" style="left:87px;top:310.8px;width:162.5px;height:8.2px;background:#f0f0f0;"></div>
<div class="t" style="left:89.50px;top:314px;font-size:3.8px;line-height:4.245px;color:#444;">Name</div>
<div class="t" style="left:172.30px;top:314px;font-size:3.8px;line-height:4.245px;color:#444;">Freq</div>
<div class="a" style="left:87px;top:319.0px;width:162.5px;height:8.2px;background:#fff;"></div>
<div class="t" style="left:89.50px;top:322px;font-size:3.8px;line-height:4.245px;color:#444;">HeatPoint Name</div>
<div class="t" style="left:172.30px;top:322px;font-size:3.8px;line-height:4.245px;color:#444;">Freq</div>
<div class="a" style="left:87px;top:327.2px;width:162.5px;height:8.2px;background:#f0f0f0;"></div>
<div class="t" style="left:89.50px;top:330px;font-size:3.8px;line-height:4.245px;color:#444;">Comments</div>
<div class="a" style="left:87px;top:335.40000000000003px;width:162.5px;height:8.2px;background:#fff;"></div>
<div class="t" style="left:89.50px;top:339px;font-size:3.8px;line-height:4.245px;color:#444;">Location</div>
<div class="t" style="left:172.30px;top:339px;font-size:3.8px;line-height:4.245px;color:#444;">Freq_Location</div>
<div class="a" style="left:87px;top:343.6px;width:162.5px;height:8.2px;background:#f0f0f0;"></div>
<div class="t" style="left:89.50px;top:347px;font-size:3.8px;line-height:4.245px;color:#444;">Minimum</div>
<div class="a" style="left:87px;top:351.8px;width:162.5px;height:8.2px;background:#fff;"></div>
<div class="t" style="left:89.50px;top:355px;font-size:3.8px;line-height:4.245px;color:#444;">Maximum</div>
<div class="a" style="left:87px;top:360.0px;width:162.5px;height:8.2px;background:#f0f0f0;"></div>
<div class="t" style="left:89.50px;top:363px;font-size:3.8px;line-height:4.245px;color:#444;">Average</div>
<div class="a" style="left:87px;top:368.2px;width:162.5px;height:8.2px;background:#fff;"></div>
<div class="t" style="left:89.50px;top:371px;font-size:3.8px;line-height:4.245px;color:#444;">Unit</div>
<div class="t" style="left:172.30px;top:371px;font-size:3.8px;line-height:4.245px;color:#444;">Hz</div>
<div class="a" style="left:87px;top:376.6px;width:162.5px;height:0.6px;background:#e0e0e0;"></div>
<div class="a" style="left:249.5px;top:310.8px;width:5.2px;height:66px;background:#fafafa;border:0.5px solid #d4d4d4;"></div>
<div class="a" style="left:249.5px;top:310.8px;width:5.2px;height:5.2px;background:#f4f4f4;border:0.5px solid #c8c8c8;"></div>
<div class="a" style="left:249.5px;top:371px;width:5.2px;height:5.5px;background:#f4f4f4;border:0.5px solid #c8c8c8;"></div>
<div class="a" style="left:249.8px;top:364.7px;width:4.6px;height:5.8px;background:#c4c4c4;"></div>
<svg class="a" style="left:249.5px;top:311px;" width="5.2" height="5" viewBox="0 0 5.2 5"><path d="M1.3 3.4l1.3-1.8 1.3 1.8z" fill="#333"/></svg>
<svg class="a" style="left:249.5px;top:371.2px;" width="5.2" height="5" viewBox="0 0 5.2 5"><path d="M1.3 1.6l1.3 1.8 1.3-1.8z" fill="#333"/></svg>
<div class="a" style="left:257px;top:93.6px;width:381px;height:12px;background:#dcdcdc;"></div>
<div class="t" style="left:262.20px;top:98px;font-size:5.6px;line-height:6.255px;color:#555;letter-spacing:-0.081px;">DataView</div>
<svg class="a" style="left:536.3px;top:97px;" width="5" height="6.5" viewBox="0 0 5 6.5"><path d="M0.5 0.5h2.8l1.2 1.2v4.3h-4z" fill="#999"/></svg>
<div class="t" style="left:542.40px;top:99px;font-size:4.7px;line-height:5.250px;color:#666;letter-spacing:-0.008px;">Generate Report</div>
<svg class="a" style="left:584.5px;top:97.3px;" width="5.5" height="5" viewBox="0 0 5.5 5"><path d="M2.6 3.6V0.9M1.5 1.9l1.1-1.1 1.1 1.1M0.6 3.2v1.5h4V3.2" stroke="#888" stroke-width="0.75" fill="none"/></svg>
<div class="t" style="left:591.90px;top:99px;font-size:4.7px;line-height:5.250px;color:#666;letter-spacing:-0.077px;">Export</div>
<svg class="a" style="left:612.3px;top:97px;" width="6" height="7" viewBox="0 0 6 7"><circle cx="2.6" cy="2.8" r="2" stroke="#888" stroke-width="0.8" fill="none"/><path d="M4 4.2l1.6 1.6" stroke="#888" stroke-width="0.9"/></svg>
<div class="t" style="left:619.30px;top:99px;font-size:4.7px;line-height:5.250px;color:#666;letter-spacing:-0.038px;">Search</div>
<div class="a" style="left:257px;top:105.6px;width:381px;height:278.6px;background:#fcfcfc;border-left:1px solid #e2e2e2;"></div>
<div class="a" style="left:255px;top:105px;width:2px;height:279px;background:#fff;"></div>
<div class="a" style="left:260px;top:107.5px;width:376px;height:171px;background:#fff;border:1px solid #dcdcdc;"></div>
<div class="a" style="left:261.2px;top:281.9px;width:189.5px;height:105px;background:#fff;border:1px solid #dcdcdc;"></div>
<div class="a" style="left:452.5px;top:281px;width:184px;height:106.5px;background:#fff;border:1px solid #dcdcdc;"></div>
<svg class="a" style="left:265px;top:111px;" width="5.5" height="5" viewBox="0 0 5.5 5"><path d="M0.3 0.9h4.6M0.3 2.5h4.6M0.3 4.1h4.6" stroke="#aaa" stroke-width="0.9"/></svg>
<svg class="a" style="left:274.7px;top:111px;" width="4.5" height="5" viewBox="0 0 4.5 5"><path d="M0.3 1h3.8M0.9 1.2v3.4h2.6V1.2M1.5 0.4h1.4" stroke="#a0a0a0" stroke-width="0.7" fill="none"/></svg>
<svg class="a" style="left:627.5px;top:111px;" width="5" height="5" viewBox="0 0 5 5"><path d="M1 1l3 3M4 1l-3 3" stroke="#555" stroke-width="0.8"/></svg>
<svg class="a" style="left:630.5px;top:272.5px;" width="5" height="5" viewBox="0 0 5 5"><path d="M4.6 0.8L0.8 4.6H4.6z" fill="#b4b4b4"/><path d="M4.6 2.6L2.6 4.6H4.6z" fill="#8a8a8a"/></svg>
<div class="t" style="left:266.00px;top:125px;font-size:4.8px;line-height:5.362px;color:#222;letter-spacing:0.191px;-webkit-text-stroke:0.15px #222;">X-Axis:Freq [Hz]</div>
<div class="t" style="left:526.50px;top:124px;font-size:4.8px;line-height:5.362px;color:#222;letter-spacing:0.238px;-webkit-text-stroke:0.15px #222;">X-Axis :</div>
<div class="a" style="left:551px;top:122.5px;width:81px;height:7.6px;background:#f4f4f4;border:0.7px solid #aaa;border-radius:1px;background:linear-gradient(#fff,#e6e6e6);"></div>
<div class="t" style="left:554.70px;top:125px;font-size:4.6px;line-height:5.138px;color:#222;letter-spacing:-0.553px;-webkit-text-stroke:0.15px #222;">Freq</div>
<div class="a" style="left:624.8px;top:123px;width:6.8px;height:6.8px;background:#eee;border-left:0.6px solid #aaa;"></div>
<svg class="a" style="left:625px;top:123.5px;" width="7" height="6" viewBox="0 0 7 6"><path d="M1.9 2.2h3l-1.5 2z" fill="#222"/></svg>
<svg class="a" style="left:0px;top:0px;" width="640" height="280" viewBox="0 0 640 280"><line x1="276.5" y1="131.8" x2="622" y2="131.8" stroke="#ededed" stroke-width="0.8"/><line x1="276.5" y1="150.3" x2="622" y2="150.3" stroke="#ededed" stroke-width="0.8"/><line x1="276.5" y1="171.4" x2="622" y2="171.4" stroke="#ededed" stroke-width="0.8"/><line x1="276.5" y1="192.4" x2="622" y2="192.4" stroke="#ededed" stroke-width="0.8"/><line x1="276.5" y1="213.5" x2="622" y2="213.5" stroke="#ededed" stroke-width="0.8"/><line x1="276.5" y1="234.5" x2="622" y2="234.5" stroke="#ededed" stroke-width="0.8"/><rect x="278.2" y="131.8" width="3.4" height="123.8" fill="#bccfe3"/><line x1="278.2" y1="139.8" x2="281.6" y2="139.8" stroke="#dde6ef" stroke-width="0.6"/><line x1="278.2" y1="160.8" x2="281.6" y2="160.8" stroke="#dde6ef" stroke-width="0.6"/><line x1="278.2" y1="181.9" x2="281.6" y2="181.9" stroke="#dde6ef" stroke-width="0.6"/><line x1="278.2" y1="202.9" x2="281.6" y2="202.9" stroke="#dde6ef" stroke-width="0.6"/><line x1="278.2" y1="224.0" x2="281.6" y2="224.0" stroke="#dde6ef" stroke-width="0.6"/><line x1="278.2" y1="245.1" x2="281.6" y2="245.1" stroke="#dde6ef" stroke-width="0.6"/><line x1="276" y1="255.6" x2="622" y2="255.6" stroke="#d5e0ec" stroke-width="0.8"/><line x1="343.5" y1="255.6" x2="343.5" y2="257.1" stroke="#ccd8e6" stroke-width="0.6"/><line x1="412.6" y1="255.6" x2="412.6" y2="257.1" stroke="#ccd8e6" stroke-width="0.6"/><line x1="481.7" y1="255.6" x2="481.7" y2="257.1" stroke="#ccd8e6" stroke-width="0.6"/><line x1="550.8" y1="255.6" x2="550.8" y2="257.1" stroke="#ccd8e6" stroke-width="0.6"/><line x1="619.9" y1="255.6" x2="619.9" y2="257.1" stroke="#ccd8e6" stroke-width="0.6"/><polyline points="281.0,255.0 283.0,228.0 287.5,183.0 291.7,166.7 301.7,138.3 317.5,132.0 344.2,146.7 361.7,146.7 386.7,164.2 413.3,171.3 449.0,166.9 494.4,152.8 552.8,164.5 622.1,167.0" fill="none" stroke="#d5d5b0" stroke-width="1.15" stroke-linejoin="round" stroke-linecap="round"/><polyline points="281.2,250.0 283.0,229.2 285.5,238.3 287.5,207.5 295.0,190.0 301.7,161.3 309.2,155.8 318.3,152.0 329.2,154.2 344.2,149.2 361.7,153.3 385.0,156.3 413.3,155.3 449.0,151.2 494.4,143.4 552.8,148.1 622.1,151.0" fill="none" stroke="#9cbf56" stroke-width="1.1" stroke-linejoin="round" stroke-linecap="round"/><polyline points="280.8,255.3 283.0,241.7 285.5,248.3 288.3,225.0 291.7,212.5 296.7,205.8 301.7,190.0 309.2,168.3 318.3,150.0 330.0,143.7 344.2,141.7 386.7,148.0 415.0,150.3 449.0,150.3 485.0,163.8 552.8,176.2 622.1,175.0" fill="none" stroke="#3b9ee0" stroke-width="1.1" stroke-linejoin="round" stroke-linecap="round"/><polyline points="281.2,254.0 282.5,198.3 285.5,205.8 288.0,171.7 291.3,148.0 296.3,169.2 301.7,132.5 309.2,142.5 320.0,142.5 343.3,144.7 413.3,194.2 449.0,211.2 485.0,223.5 552.8,242.6 622.1,252.8" fill="none" stroke="#ee922a" stroke-width="1.1" stroke-linejoin="round" stroke-linecap="round"/></svg>
<div class="t" style="left:273.26px;top:149px;font-size:4.2px;line-height:4.691px;color:#333;font-weight:bold;">1</div>
<div class="t" style="left:269.76px;top:170px;font-size:4.2px;line-height:4.691px;color:#333;font-weight:bold;">0.8</div>
<div class="t" style="left:269.76px;top:191px;font-size:4.2px;line-height:4.691px;color:#333;font-weight:bold;">0.6</div>
<div class="t" style="left:269.76px;top:212px;font-size:4.2px;line-height:4.691px;color:#333;font-weight:bold;">0.4</div>
<div class="t" style="left:269.76px;top:234px;font-size:4.2px;line-height:4.691px;color:#333;font-weight:bold;">0.2</div>
<div class="t" style="left:273.26px;top:255px;font-size:4.2px;line-height:4.691px;color:#333;font-weight:bold;">0</div>
<div class="t" style="left:338.72px;top:260px;font-size:4.3px;line-height:4.803px;color:#333;font-weight:bold;">1000</div>
<div class="t" style="left:407.82px;top:260px;font-size:4.3px;line-height:4.803px;color:#333;font-weight:bold;">2000</div>
<div class="t" style="left:476.92px;top:260px;font-size:4.3px;line-height:4.803px;color:#333;font-weight:bold;">3000</div>
<div class="t" style="left:546.02px;top:260px;font-size:4.3px;line-height:4.803px;color:#333;font-weight:bold;">4000</div>
<div class="t" style="left:615.12px;top:260px;font-size:4.3px;line-height:4.803px;color:#333;font-weight:bold;">5000</div>
<svg class="a" style="left:265.0px;top:268.4px;" width="6.5" height="6.5" viewBox="0 0 6.5 6.5"><rect x="0.6" y="1.2" width="4.8" height="4.8" fill="#fff" stroke="#666" stroke-width="0.6"/><path d="M1.6 3.6l1.2 1.2 2.4-3.8" stroke="#222" stroke-width="0.7" fill="none"/></svg>
<div class="a" style="left:273.4px;top:268.4px;width:4.1px;height:6px;background:#ee922a;"></div>
<div class="t" style="left:281.25px;top:271px;font-size:4.3px;line-height:4.803px;color:#333;letter-spacing:0.204px;font-weight:bold;">Specimen Alpha</div>
<svg class="a" style="left:326.1px;top:268.4px;" width="6.5" height="6.5" viewBox="0 0 6.5 6.5"><rect x="0.6" y="1.2" width="4.8" height="4.8" fill="#fff" stroke="#666" stroke-width="0.6"/><path d="M1.6 3.6l1.2 1.2 2.4-3.8" stroke="#222" stroke-width="0.7" fill="none"/></svg>
<div class="a" style="left:334.5px;top:268.4px;width:4.1px;height:6px;background:#9cbf56;"></div>
<div class="t" style="left:342.35px;top:271px;font-size:4.3px;line-height:4.803px;color:#333;letter-spacing:0.204px;font-weight:bold;">Specimen Alpha</div>
<svg class="a" style="left:387.2px;top:268.4px;" width="6.5" height="6.5" viewBox="0 0 6.5 6.5"><rect x="0.6" y="1.2" width="4.8" height="4.8" fill="#fff" stroke="#666" stroke-width="0.6"/><path d="M1.6 3.6l1.2 1.2 2.4-3.8" stroke="#222" stroke-width="0.7" fill="none"/></svg>
<div class="a" style="left:395.59999999999997px;top:268.4px;width:4.1px;height:6px;background:#3b9ee0;"></div>
<div class="t" style="left:403.45px;top:271px;font-size:4.3px;line-height:4.803px;color:#333;letter-spacing:0.204px;font-weight:bold;">Specimen Alpha</div>
<svg class="a" style="left:448.3px;top:268.4px;" width="6.5" height="6.5" viewBox="0 0 6.5 6.5"><rect x="0.6" y="1.2" width="4.8" height="4.8" fill="#fff" stroke="#666" stroke-width="0.6"/><path d="M1.6 3.6l1.2 1.2 2.4-3.8" stroke="#222" stroke-width="0.7" fill="none"/></svg>
<div class="a" style="left:456.7px;top:268.4px;width:4.1px;height:6px;background:#d5d5b0;"></div>
<div class="t" style="left:464.55px;top:271px;font-size:4.3px;line-height:4.803px;color:#333;letter-spacing:0.204px;font-weight:bold;">Specimen Alpha</div>
<svg class="a" style="left:266.5px;top:285px;" width="5.5" height="5" viewBox="0 0 5.5 5"><path d="M0.3 0.9h4.6M0.3 2.5h4.6M0.3 4.1h4.6" stroke="#aaa" stroke-width="0.9"/></svg>
<svg class="a" style="left:275.5px;top:284.5px;" width="4.5" height="5" viewBox="0 0 4.5 5"><path d="M0.3 1h3.8M0.9 1.2v3.4h2.6V1.2M1.5 0.4h1.4" stroke="#a0a0a0" stroke-width="0.7" fill="none"/></svg>
<svg class="a" style="left:443px;top:284.5px;" width="5" height="5" viewBox="0 0 5 5"><path d="M1 1l3 3M4 1l-3 3" stroke="#555" stroke-width="0.8"/></svg>
<svg class="a" style="left:445px;top:381.2px;" width="5" height="5" viewBox="0 0 5 5"><path d="M4.6 0.8L0.8 4.6H4.6z" fill="#b4b4b4"/><path d="M4.6 2.6L2.6 4.6H4.6z" fill="#8a8a8a"/></svg>
<div class="clip" style="left:262px;top:283px;width:188px;height:103.3px"><svg class="a" style="left:43px;top:22px" width="85" height="85" viewBox="0 0 480 480"><defs>
<linearGradient id="rg" x1="0" y1="0" x2="1" y2="0"><stop offset="0" stop-color="#8a8a8a"/><stop offset="0.5" stop-color="#c2c2c2"/><stop offset="1" stop-color="#9a9a9a"/></linearGradient>
<linearGradient id="lg" x1="0" y1="0" x2="1" y2="0.3"><stop offset="0" stop-color="#5a5752"/><stop offset="0.35" stop-color="#8a857c"/><stop offset="1" stop-color="#5e5b56"/></linearGradient>
<filter id="nz" x="0" y="0" width="1" height="1"><feTurbulence type="fractalNoise" baseFrequency="0.05" numOctaves="3" seed="7"/><feColorMatrix values="0 0 0 0 0  0 0 0 0 0  0 0 0 0 0  0 0 0 -2.2 1.25"/><feComposite in2="SourceGraphic" operator="in"/></filter>
<filter id="nzw" x="0" y="0" width="1" height="1"><feTurbulence type="fractalNoise" baseFrequency="0.08" numOctaves="2" seed="11"/><feColorMatrix values="0 0 0 0 0.75  0 0 0 0 0.75  0 0 0 0 0.75  0 0 0 -2.5 1.1"/><feComposite in2="SourceGraphic" operator="in"/></filter>
</defs>
<polygon points="60,90 330,120 325,460 95,460 75,410 55,350 48,290 60,230 50,170" fill="url(#lg)"/>
<polygon points="330,120 420,120 440,200 448,260 430,320 415,380 405,460 325,460" fill="url(#rg)"/>
<g filter="url(#nz)" opacity="0.5"><polygon points="60,90 440,120 448,260 405,460 95,460 75,410 55,350 48,290 60,230 50,170" fill="#000"/></g>
<polygon points="130,160 230,165 235,260 140,255 125,200" fill="#b3ab9e"/>
<polygon points="240,175 300,180 305,230 245,235" fill="#968f84"/>
<circle cx="215" cy="270" r="38" fill="#2e2c2a"/><circle cx="222" cy="272" r="22" fill="#8c8c8a"/><circle cx="222" cy="272" r="10" fill="#3c3c3c"/>
<polygon points="170,230 260,225 300,300 290,350 220,345 175,320" fill="#3a3834" opacity="0.55"/>
<polygon points="40,60 60,34 110,38 135,55 185,40 255,34 305,36 350,50 390,78 415,98 432,130 430,172 385,168 345,180 300,160 250,150 200,152 150,145 120,150 88,145 60,140 40,110" fill="#1e1e1e"/>
<g filter="url(#nzw)" opacity="0.45"><polygon points="40,60 60,34 110,38 135,55 185,40 255,34 305,36 350,50 390,78 415,98 432,130 430,172 385,168 345,180 300,160 250,150 200,152 150,145 120,150 88,145 60,140 40,110" fill="#fff"/></g>

<path d="M318 170 Q322 300 308 430" stroke="#121212" stroke-width="9" fill="none"/>
<path d="M30 160 L80 150 M35 195 L75 175 M60 200 L90 230" stroke="#1c1c1c" stroke-width="7"/>
<circle cx="420" cy="255" r="30" fill="#1e1e1e"/><circle cx="420" cy="255" r="12" fill="#4a4a4a"/>
<circle cx="375" cy="375" r="36" fill="#1a1a1a"/><circle cx="375" cy="375" r="14" fill="#444"/>
<rect x="180" y="360" width="30" height="100" fill="#1a1a1a"/>
<rect x="100" y="440" width="240" height="25" fill="#2a2a28"/>
<polygon points="60,300 110,290 120,380 80,400" fill="#5e5a54"/>
<rect x="250" y="260" width="45" height="40" fill="#a39b8e"/>
<rect x="310" y="70" width="18" height="18" fill="#d1b348"/>
<rect x="390" y="120" width="25" height="20" fill="#777"/>
<polygon points="95,250 160,260 175,340 150,440 110,430 90,330" fill="#3e3b37" opacity="0.6"/>
<polygon points="240,330 310,320 315,440 250,445" fill="#34322f" opacity="0.65"/>
<path d="M40 240 Q70 300 60 380" stroke="#2a2826" stroke-width="10" fill="none" opacity="0.7"/>
<rect x="150" y="400" width="12" height="12" fill="#ddd"/>
<polygon points="345,170 400,160 425,190 380,200 340,200" fill="#d8d8d8" opacity="0.8"/>
</svg></div>
<svg class="a" style="left:457.8px;top:285.2px;" width="5.5" height="5" viewBox="0 0 5.5 5"><path d="M0.3 0.9h4.6M0.3 2.5h4.6M0.3 4.1h4.6" stroke="#aaa" stroke-width="0.9"/></svg>
<svg class="a" style="left:467.8px;top:284.6px;" width="4.5" height="5" viewBox="0 0 4.5 5"><path d="M0.3 1h3.8M0.9 1.2v3.4h2.6V1.2M1.5 0.4h1.4" stroke="#a0a0a0" stroke-width="0.7" fill="none"/></svg>
<svg class="a" style="left:627.8px;top:285.5px;" width="5" height="5" viewBox="0 0 5 5"><path d="M1 1l3 3M4 1l-3 3" stroke="#555" stroke-width="0.8"/></svg>
<svg class="a" style="left:630.3px;top:381.8px;" width="5" height="5" viewBox="0 0 5 5"><path d="M4.6 0.8L0.8 4.6H4.6z" fill="#b4b4b4"/><path d="M4.6 2.6L2.6 4.6H4.6z" fill="#8a8a8a"/></svg>
<div class="a" style="left:455px;top:294.2px;width:178px;height:6.9px;background:#d8d8d8;border-top:0.9px solid #999;border-bottom:0.9px solid #999;"></div>
<div class="a" style="left:513.2px;top:294.2px;width:0.9px;height:6.9px;background:#999;"></div>
<div class="a" style="left:571.2px;top:294.2px;width:0.9px;height:6.9px;background:#999;"></div>
<div class="t" style="left:455.70px;top:297px;font-size:3.4px;line-height:3.798px;color:#222;font-weight:bold;">Quantity Name</div>
<div class="t" style="left:514.50px;top:297px;font-size:3.4px;line-height:3.798px;color:#222;font-weight:bold;">Freq</div>
<div class="t" style="left:572.50px;top:297px;font-size:3.4px;line-height:3.798px;color:#222;font-weight:bold;">Specimen Alpha</div>
<div class="a" style="left:455px;top:301.1px;width:178px;height:7.3px;background:#fff;"></div>
<div class="a" style="left:513.2px;top:301.1px;width:0.9px;height:7.3px;background:#aaa;"></div>
<div class="a" style="left:571.2px;top:301.1px;width:0.9px;height:7.3px;background:#aaa;"></div>
<div class="t" style="left:455.70px;top:304px;font-size:3.4px;line-height:3.798px;color:#222;font-weight:bold;">Unit</div>
<div class="t" style="left:514.50px;top:304px;font-size:3.4px;line-height:3.798px;color:#222;font-weight:bold;">Hz</div>
<div class="t" style="left:572.50px;top:304px;font-size:3.4px;line-height:3.798px;color:#222;font-weight:bold;">cm-1</div>
<div class="a" style="left:455px;top:308.4px;width:178px;height:6.9px;background:#d8d8d8;border-top:0.9px solid #999;border-bottom:0.9px solid #999;"></div>
<div class="a" style="left:513.2px;top:308.4px;width:0.9px;height:6.9px;background:#999;"></div>
<div class="a" style="left:571.2px;top:308.4px;width:0.9px;height:6.9px;background:#999;"></div>
<div class="t" style="left:455.70px;top:311px;font-size:3.4px;line-height:3.798px;color:#222;font-weight:bold;">Count</div>
<div class="t" style="left:514.50px;top:311px;font-size:3.4px;line-height:3.798px;color:#222;font-weight:bold;">18</div>
<div class="t" style="left:572.50px;top:311px;font-size:3.4px;line-height:3.798px;color:#222;font-weight:bold;">18</div>
<div class="a" style="left:455px;top:315.3px;width:174.10000000000002px;height:8.05px;background:#efefef;"></div>
<div class="t" style="left:457.00px;top:319px;font-size:3.7px;line-height:4.133px;color:#111;font-weight:bold;">1</div>
<div class="t" style="left:514.80px;top:319px;font-size:3.7px;line-height:4.133px;color:#111;letter-spacing:-0.087px;font-weight:bold;">100</div>
<div class="t" style="left:572.80px;top:319px;font-size:3.7px;line-height:4.133px;color:#111;font-weight:bold;">0.15</div>
<div class="a" style="left:455px;top:323.35px;width:174.10000000000002px;height:8.05px;background:#fff;"></div>
<div class="t" style="left:457.00px;top:327px;font-size:3.7px;line-height:4.133px;color:#111;font-weight:bold;">2</div>
<div class="t" style="left:514.80px;top:327px;font-size:3.7px;line-height:4.133px;color:#111;letter-spacing:-0.087px;font-weight:bold;">125</div>
<div class="t" style="left:572.80px;top:327px;font-size:3.7px;line-height:4.133px;color:#111;font-weight:bold;">0.25</div>
<div class="a" style="left:455px;top:331.40000000000003px;width:174.10000000000002px;height:8.05px;background:#efefef;"></div>
<div class="t" style="left:457.00px;top:335px;font-size:3.7px;line-height:4.133px;color:#111;font-weight:bold;">3</div>
<div class="t" style="left:514.80px;top:335px;font-size:3.7px;line-height:4.133px;color:#111;letter-spacing:-0.087px;font-weight:bold;">160</div>
<div class="t" style="left:572.80px;top:335px;font-size:3.7px;line-height:4.133px;color:#111;font-weight:bold;">0.18</div>
<div class="a" style="left:455px;top:339.45px;width:174.10000000000002px;height:8.05px;background:#fff;"></div>
<div class="t" style="left:457.00px;top:343px;font-size:3.7px;line-height:4.133px;color:#111;font-weight:bold;">4</div>
<div class="t" style="left:514.80px;top:343px;font-size:3.7px;line-height:4.133px;color:#111;letter-spacing:-0.087px;font-weight:bold;">200</div>
<div class="t" style="left:572.80px;top:343px;font-size:3.7px;line-height:4.133px;color:#111;font-weight:bold;">0.45</div>
<div class="a" style="left:455px;top:347.5px;width:174.10000000000002px;height:8.05px;background:#efefef;"></div>
<div class="t" style="left:457.00px;top:351px;font-size:3.7px;line-height:4.133px;color:#111;font-weight:bold;">5</div>
<div class="t" style="left:514.80px;top:351px;font-size:3.7px;line-height:4.133px;color:#111;letter-spacing:-0.087px;font-weight:bold;">250</div>
<div class="t" style="left:572.80px;top:351px;font-size:3.7px;line-height:4.133px;color:#111;font-weight:bold;">0.55</div>
<div class="a" style="left:455px;top:355.55px;width:174.10000000000002px;height:8.05px;background:#fff;"></div>
<div class="t" style="left:457.00px;top:359px;font-size:3.7px;line-height:4.133px;color:#111;font-weight:bold;">6</div>
<div class="t" style="left:514.80px;top:359px;font-size:3.7px;line-height:4.133px;color:#111;letter-spacing:-0.087px;font-weight:bold;">315</div>
<div class="t" style="left:572.80px;top:359px;font-size:3.7px;line-height:4.133px;color:#111;font-weight:bold;">0.7</div>
<div class="a" style="left:455px;top:363.6px;width:174.10000000000002px;height:8.05px;background:#efefef;"></div>
<div class="t" style="left:457.00px;top:367px;font-size:3.7px;line-height:4.133px;color:#111;font-weight:bold;">7</div>
<div class="t" style="left:514.80px;top:367px;font-size:3.7px;line-height:4.133px;color:#111;letter-spacing:-0.087px;font-weight:bold;">400</div>
<div class="t" style="left:572.80px;top:367px;font-size:3.7px;line-height:4.133px;color:#111;font-weight:bold;">0.85</div>
<div class="a" style="left:455px;top:371.65000000000003px;width:174.10000000000002px;height:8.05px;background:#fff;"></div>
<div class="t" style="left:457.00px;top:375px;font-size:3.7px;line-height:4.133px;color:#111;font-weight:bold;">8</div>
<div class="t" style="left:514.80px;top:375px;font-size:3.7px;line-height:4.133px;color:#111;letter-spacing:-0.087px;font-weight:bold;">500</div>
<div class="t" style="left:572.80px;top:375px;font-size:3.7px;line-height:4.133px;color:#111;font-weight:bold;">0.94</div>
<div class="a" style="left:455px;top:379.70000000000005px;width:174.10000000000002px;height:6.899999999999977px;background:#efefef;"></div>
<div class="t" style="left:457.00px;top:383px;font-size:3.7px;line-height:4.133px;color:#111;font-weight:bold;">9</div>
<div class="t" style="left:514.80px;top:383px;font-size:3.7px;line-height:4.133px;color:#111;letter-spacing:-0.087px;font-weight:bold;">630</div>
<div class="t" style="left:572.80px;top:383px;font-size:3.7px;line-height:4.133px;color:#111;font-weight:bold;">0.98</div>
<div class="a" style="left:629.1px;top:315.3px;width:4px;height:71.3px;background:#f4f4f4;border-left:0.5px solid #ddd;"></div>
<svg class="a" style="left:629.1px;top:316.5px;" width="4" height="4.5" viewBox="0 0 4 4.5"><path d="M0.8 3.2l1.2-1.9 1.2 1.9z" fill="#333"/><path d="M0 4.2h4" stroke="#ccc" stroke-width="0.5"/></svg>
<div class="a" style="left:0px;top:398.8px;width:638px;height:4.8px;background:#c2c2c2;"></div>
<div class="a" style="left:631px;top:398.8px;width:7px;height:4.8px;background:#e8e8e8;"></div>
<svg class="a" style="left:632px;top:399.2px;" width="5" height="4" viewBox="0 0 5 4"><path d="M1.5 1l1 1.2 1-1.2z" fill="#333"/></svg>
<div class="a" style="left:0px;top:398.8px;width:4px;height:4.8px;background:#ededed;"></div>
</body></html>
